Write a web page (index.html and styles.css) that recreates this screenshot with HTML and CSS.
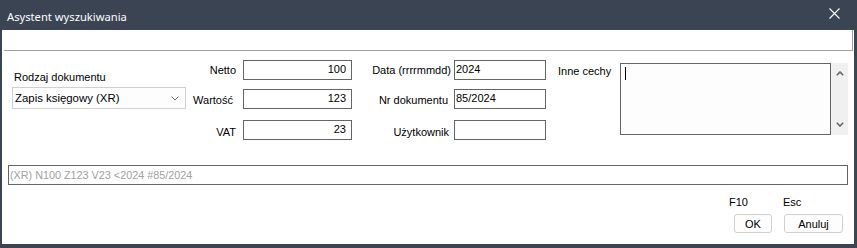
FILE: index.html
```html
<!DOCTYPE html>
<html lang="pl">
<head>
<meta charset="utf-8">
<title>Asystent wyszukiwania</title>
<link rel="stylesheet" href="styles.css">
</head>
<body>
<div class="window">
  <div class="titlebar">
    <span class="title">Asystent wyszukiwania</span>
    <svg class="close" width="11" height="11" viewBox="0 0 11 11"><path d="M0.5 0.5L10.5 10.5M10.5 0.5L0.5 10.5" stroke="#ffffff" stroke-width="1.1" fill="none"/></svg>
  </div>
  <div class="client">
    <div class="topbox"></div>
    <div class="form">
      <div class="col-type">
        <div class="lbl type-lbl">Rodzaj dokumentu</div>
        <div class="select">
          <span class="select-text">Zapis księgowy (XR)</span>
          <svg class="chev" width="8" height="5" viewBox="0 0 8 5"><path d="M0.5 0.5L4 4L7.5 0.5" stroke="#6a6a6a" stroke-width="1" fill="none"/></svg>
        </div>
      </div>
      <div class="grid amounts">
        <div class="lbl l-netto">Netto</div><div class="input num">100</div>
        <div class="lbl l-wartosc">Wartość</div><div class="input num">123</div>
        <div class="lbl l-vat">VAT</div><div class="input num">23</div>
      </div>
      <div class="grid meta">
        <div class="lbl l-data">Data (rrrrmmdd)</div><div class="input txt">2024</div>
        <div class="lbl l-nr">Nr dokumentu</div><div class="input txt">85/2024</div>
        <div class="lbl l-user">Użytkownik</div><div class="input txt"></div>
      </div>
      <div class="col-other">
        <div class="lbl l-inne">Inne cechy</div>
        <div class="memo">
          <div class="memo-box"><span class="caret"></span></div>
          <div class="scroll">
            <svg width="8" height="5" viewBox="0 0 8 5"><path d="M0.8 4.2L4 1L7.2 4.2" stroke="#606060" stroke-width="1.5" fill="none"/></svg>
            <svg width="8" height="5" viewBox="0 0 8 5"><path d="M0.8 0.8L4 4L7.2 0.8" stroke="#606060" stroke-width="1.5" fill="none"/></svg>
          </div>
        </div>
      </div>
    </div>
    <div class="summary">(XR) N100 Z123 V23 &lt;2024 #85/2024</div>
    <div class="footer">
      <div class="btn-group g-ok">
        <span class="key">F10</span>
        <button class="btn b-ok">OK</button>
      </div>
      <div class="btn-group g-cancel">
        <span class="key">Esc</span>
        <button class="btn b-cancel">Anuluj</button>
      </div>
    </div>
  </div>
</div>
</body>
</html>
```
FILE: styles.css
```css
html, body {
  margin: 0;
  padding: 0;
  background: #3a4452;
}
.window {
  width: 857px;
  height: 248px;
  background: #3a4452;
  display: flex;
  flex-direction: column;
  font-family: "Liberation Sans", Arial, sans-serif;
  font-size: 11px;
  color: #000;
}
.titlebar {
  height: 30px;
  display: flex;
  align-items: center;
  justify-content: space-between;
  padding: 0 17px 0 7px;
  box-sizing: border-box;
}
.title {
  font-family: "Noto Sans", "Open Sans", sans-serif;
  font-size: 11.2px;
  color: #ffffff;
  position: relative;
  top: 1px;
}
.close {
  display: block;
  margin-top: -4px;
}
.client {
  flex: 1;
  margin: 0 3px 4px 2px;
  background: #ffffff;
  display: flex;
  flex-direction: column;
}
.topbox {
  height: 20px;
  margin: 0 1px 0 2px;
  border-right: 1px solid #a0a0a0;
  border-bottom: 1px solid #a0a0a0;
}
.form {
  height: 114px;
  display: flex;
  align-items: flex-start;
}
.lbl {
  line-height: 13px;
  white-space: nowrap;
}
.col-type {
  margin-left: 10px;
  width: 174px;
}
.type-lbl {
  margin-top: 20px;
  padding-left: 2px;
}
.select {
  margin-top: 3px;
  height: 22px;
  box-sizing: border-box;
  border: 1px solid #cfcfcf;
  background: #fdfdfd;
  display: flex;
  align-items: center;
  justify-content: space-between;
  padding: 0 6px 0 2px;
}
.select-text {
  font-size: 11.4px;
}
.chev {
  display: block;
}
.grid {
  display: grid;
  margin-top: 9px;
  grid-template-rows: 29px 31px 20px;
  align-items: start;
}
.amounts {
  grid-template-columns: 50px 109px;
  column-gap: 7px;
}
.meta {
  grid-template-columns: 99px 92px;
  column-gap: 3px;
}
.grid .lbl {
  text-align: right;
}
.l-netto { margin-top: 4px; }
.l-wartosc { margin-top: 5px; padding-right: 3px; }
.l-vat { margin-top: 6px; }
.l-data { margin-top: 4px; }
.l-nr { margin-top: 5px; padding-right: 3px; }
.l-user { margin-top: 6px; padding-right: 2px; }
.input {
  height: 20px;
  box-sizing: border-box;
  border: 1px solid #646464;
  background: #ffffff;
  line-height: 16px;
  white-space: nowrap;
}
.num {
  text-align: right;
  padding-right: 5px;
}
.txt {
  padding-left: 1px;
}
.col-other {
  display: flex;
  margin-left: 12px;
}
.l-inne {
  width: 62px;
  margin-top: 14px;
}
.memo {
  display: flex;
  margin-top: 12px;
  height: 72px;
}
.memo-box {
  width: 211px;
  box-sizing: border-box;
  border: 1px solid #646464;
  background: #fdfdfd;
  padding: 3px 0 0 4px;
}
.caret {
  display: block;
  width: 1px;
  height: 13px;
  background: #000;
}
.scroll {
  width: 17px;
  background: #f0f0f0;
  display: flex;
  flex-direction: column;
  justify-content: space-between;
  align-items: center;
  padding: 8px 0 8px 0;
  box-sizing: border-box;
}
.scroll svg {
  display: block;
}
.summary {
  margin: 0 6px;
  height: 20px;
  box-sizing: border-box;
  border: 1px solid #646464;
  line-height: 18px;
  padding-left: 1px;
  color: #a0a0a0;
  font-size: 10.8px;
  white-space: nowrap;
}
.footer {
  display: flex;
  justify-content: flex-end;
  gap: 11px;
  padding: 11px 11px 0 0;
}
.btn-group {
  display: flex;
  flex-direction: column;
  align-items: flex-start;
}
.key {
  line-height: 13px;
}
.btn {
  margin-top: 5px;
  height: 19px;
  box-sizing: border-box;
  border: 1px solid #cfcfcf;
  border-radius: 3px;
  background: #fdfdfd;
  font-family: "Liberation Sans", Arial, sans-serif;
  font-size: 11px;
  color: #000;
  padding: 0;
  line-height: 16px;
}
.b-ok {
  margin-left: 5px;
  width: 38px;
}
.b-cancel {
  margin-left: 1px;
  width: 59px;
}
```
